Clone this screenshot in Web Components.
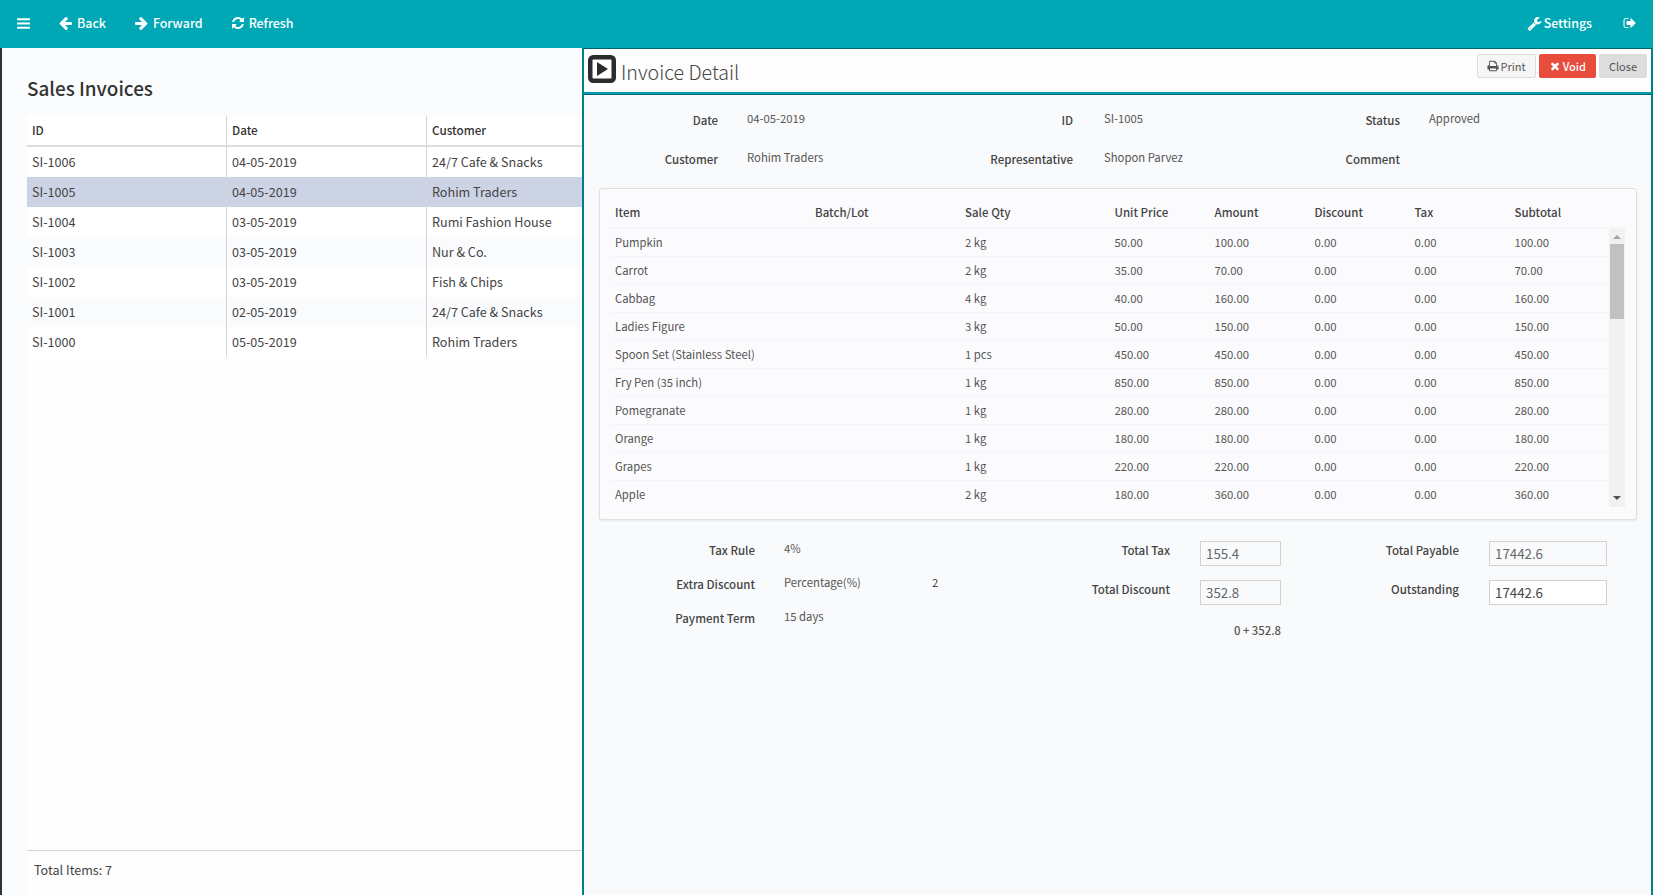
<!DOCTYPE html>
<html>
<head>
<meta charset="utf-8">
<title>Sales Invoices</title>
<style>
    html, body { margin: 0; height: 100%; overflow: hidden; }
    body {
        font-family: "Noto Sans CJK SC", "Source Sans Pro", "Noto Sans", sans-serif;
        font-size: 12.6px;
        color: #444;
        display: flex;
        flex-direction: column;
        height: 895px;
    }
</style>
</head>
<body>
<app-toolbar></app-toolbar>
<app-workspace>
    <invoice-list></invoice-list>
    <invoice-detail></invoice-detail>
</app-workspace>

<script>
const ICONS = {
    bars: 'M1664 1344v128q0 26-19 45t-45 19h-1408q-26 0-45-19t-19-45v-128q0-26 19-45t45-19h1408q26 0 45 19t19 45zm0-512v128q0 26-19 45t-45 19h-1408q-26 0-45-19t-19-45v-128q0-26 19-45t45-19h1408q26 0 45 19t19 45zm0-512v128q0 26-19 45t-45 19h-1408q-26 0-45-19t-19-45v-128q0-26 19-45t45-19h1408q26 0 45 19t19 45z',
    back: 'M1664 832v128q0 53-32.500 90.500t-84.500 37.500h-704l293 294q38 36 38 90t-38 90l-75 76q-38 38-90 38-53 0-91-38l-651-652q-37-37-37-90 0-52 37-91l651-650q39-39 91-39 51 0 90 39l75 74q38 38 38 91t-38 91l-293 293h704q52 0 84.500 37.500t32.500 90.500z',
    forward: 'M1600 896q0 54-37 91l-651 651q-39 37-91 37-51 0-90-37l-75-75q-38-38-38-91t38-91l293-293h-704q-52 0-84.500-37.500t-32.500-90.500v-128q0-53 32.500-90.500t84.500-37.500h704l-293-294q-38-36-38-90t38-90l75-75q38-38 90-38 53 0 91 38l651 651q37 35 37 90z',
    refresh: 'M1639 1056q0 5-1 7-64 268-268 434.500t-478 166.500q-146 0-282.500-55t-243.500-157l-129 129q-19 19-45 19t-45-19-19-45v-448q0-26 19-45t45-19h448q26 0 45 19t19 45-19 45l-137 137q71 66 161 102t187 36q134 0 250-65t186-179q11-17 53-117 8-23 30-23h192q13 0 22.500 9.500t9.500 22.500zm25-800v448q0 26-19 45t-45 19h-448q-26 0-45-19t-19-45 19-45l138-138q-148-137-349-137-134 0-250 65t-186 179q-11 17-53 117-8 23-30 23h-199q-13 0-22.500-9.500t-9.500-22.500v-7q65-268 270-434.500t480-166.500q146 0 284 55.500t245 156.500l130-129q19-19 45-19t45 19 19 45z',
    wrench: 'M448 1472q0-26-19-45t-45-19-45 19-19 45 19 45 45 19 45-19 19-45zm644-420l-682 682q-37 37-90 37-52 0-91-37l-106-108q-38-36-38-90 0-53 38-91l681-681q39 98 114.500 173.500t173.500 114.500zm634-435q0 39-23 106-47 134-164.500 217.500t-258.500 83.500q-185 0-316.500-131.500t-131.500-316.500 131.500-316.500 316.500-131.500q58 0 121.500 16.500t107.500 46.500q16 11 16 28t-16 28l-293 169v224l193 107q5-3 79-48.500t135.500-81 70.500-35.500q15 0 23.500 10t8.500 25z',
    signout: 'M704 1440q0 4 1 20t.5 26.500-3 23.500-10 19.500-20.500 6.500h-320q-119 0-203.500-84.500t-84.500-203.500v-704q0-119 84.500-203.500t203.500-84.500h320q13 0 22.500 9.500t9.500 22.500q0 4 1 20t.5 26.500-3 23.500-10 19.500-20.500 6.500h-320q-66 0-113 47t-47 113v704q0 66 47 113t113 47h312l11.500 1 11.500 3 8 5.500 7 9 2 13.500zm928-544q0 26-19 45l-544 544q-19 19-45 19t-45-19-19-45v-288h-448q-26 0-45-19t-19-45v-384q0-26 19-45t45-19h448v-288q0-26 19-45t45-19 45 19l544 544q19 19 19 45z',
    print: 'M448 1536h896v-256h-896v256zm0-640h896v-384h-160q-40 0-68-28t-28-68v-160h-640v640zm1152 64q0-26-19-45t-45-19-45 19-19 45 19 45 45 19 45-19 19-45zm128 0v416q0 13-9.500 22.500t-22.500 9.500h-224v160q0 40-28 68t-68 28h-960q-40 0-68-28t-28-68v-160h-224q-13 0-22.500-9.500t-9.500-22.500v-416q0-79 56.500-135.500t135.500-56.500h64v-544q0-40 28-68t68-28h672q40 0 88 20t76 48l152 152q28 28 48 76t20 88v256h64q79 0 135.500 56.500t56.500 135.500z',
    times: 'M1490 1322q0 40-28 68l-136 136q-28 28-68 28t-68-28l-294-294-294 294q-28 28-68 28t-68-28l-136-136q-28-28-28-68t28-68l294-294-294-294q-28-28-28-68t28-68l136-136q28-28 68-28t68 28l294 294 294-294q28-28 68-28t68 28l136 136q28 28 28 68t-28 68l-294 294 294 294q28 28 28 68z'
};

class FaIcon extends HTMLElement {
    connectedCallback() {
        const size = this.getAttribute('size') || 14;
        this.attachShadow({mode: 'open'}).innerHTML = `
            <style>
                :host { display: inline-flex; flex: none; }
                svg { width: ${size}px; height: ${size}px; fill: currentColor; display: block; }
            </style>
            <svg viewBox="0 0 1792 1792"><path d="${ICONS[this.getAttribute('name')]}"/></svg>`;
    }
}

const toolbarTemplate = document.createElement('template');
toolbarTemplate.innerHTML = `
    <style>
        :host {
            display: flex;
            flex: none;
            align-items: center;
            height: 48px;
            background: #00a8b5;
            color: #fff;
            font-size: 12.4px;
            padding: 0 0 2px 16px;
            box-sizing: border-box;
        }
        .item { display: flex; align-items: center; gap: 4px; font-weight: 500; }
        .menu { margin-right: 27px; }
        .nav { margin-right: 28px; }
        .spacer { flex: 1; }
        .settings { margin-right: 31px; gap: 2px; }
        .logout { margin-right: 16px; }
    </style>
    <span class="item menu"><fa-icon name="bars" size="15"></fa-icon></span>
    <span class="item nav"><fa-icon name="back" size="15"></fa-icon>Back</span>
    <span class="item nav"><fa-icon name="forward" size="15"></fa-icon>Forward</span>
    <span class="item nav"><fa-icon name="refresh" size="14"></fa-icon>Refresh</span>
    <span class="spacer"></span>
    <span class="item settings"><fa-icon name="wrench" size="15"></fa-icon>Settings</span>
    <span class="item logout"><fa-icon name="signout" size="14"></fa-icon></span>
`;

class AppToolbar extends HTMLElement {
    constructor() {
        super();
        this.attachShadow({mode: 'open'});
        this.shadowRoot.appendChild(toolbarTemplate.content.cloneNode(true));
    }
}

class AppWorkspace extends HTMLElement {
    constructor() {
        super();
        this.attachShadow({mode: 'open'}).innerHTML = `
            <style>
                :host { display: flex; flex: 1; min-height: 0; }
            </style>
            <slot></slot>`;
    }
}

const INVOICES = [
    ['SI-1006', '04-05-2019', '24/7 Cafe & Snacks'],
    ['SI-1005', '04-05-2019', 'Rohim Traders'],
    ['SI-1004', '03-05-2019', 'Rumi Fashion House'],
    ['SI-1003', '03-05-2019', 'Nur & Co.'],
    ['SI-1002', '03-05-2019', 'Fish & Chips'],
    ['SI-1001', '02-05-2019', '24/7 Cafe & Snacks'],
    ['SI-1000', '05-05-2019', 'Rohim Traders']
];

const esc = (s) => s.replace(/&/g, '&amp;');

class InvoiceList extends HTMLElement {
    constructor() {
        super();
        const rows = INVOICES.map((r, i) => `
            <div class="row ${i === 1 ? 'selected' : ''} ${i % 2 ? 'alt' : ''}">
                <span>${r[0]}</span><span>${r[1]}</span><span>${esc(r[2])}</span>
            </div>`).join('');
        this.attachShadow({mode: 'open'}).innerHTML = `
            <style>
                :host {
                    display: flex;
                    flex-direction: column;
                    flex: none;
                    width: 582px;
                    box-sizing: border-box;
                    border-left: 2px solid #2c3538;
                    padding-left: 25px;
                    background: #fafcfd;
                    color: #444;
                }
                h1 {
                    margin: 0;
                    padding: 26px 0 15px 0;
                    font-size: 18.900px;
                    line-height: 27px;
                    font-weight: 500;
                    color: #333;
                }
                .table { flex: 1; background: #fefefe; }
                .row {
                    display: grid;
                    grid-template-columns: 200px 200px 1fr;
                    height: 30px;
                    line-height: 30px;
                    background: #fff;
                }
                .row.alt { background: #fafbfc; }
                .row.selected { background: #ccd3e4; }
                .row span { padding-left: 5px; border-right: 1px solid #d4d4d4; box-sizing: border-box; white-space: nowrap; overflow: hidden; }
                .row span:last-child { border-right: 0; }
                .head { border-bottom: 2px solid #ddd; height: 31px; box-sizing: border-box; font-size: 11.700px; font-weight: 500; color: #333; line-height: 27px; }
                .foot {
                    border-top: 1px solid #d4d4d4;
                    height: 44px;
                    line-height: 38px;
                    padding-left: 7px;
                    background: #fefefe;
                }
            </style>
            <h1>Sales Invoices</h1>
            <div class="table">
                <div class="row head"><span>ID</span><span>Date</span><span>Customer</span></div>
                ${rows}
            </div>
            <div class="foot">Total Items: 7</div>`;
    }
}

class AppButton extends HTMLElement {
    constructor() {
        super();
        this.attachShadow({mode: 'open'}).innerHTML = `
            <style>
                :host {
                    display: inline-flex;
                    align-items: center;
                    justify-content: center;
                    gap: 2px;
                    height: 24px;
                    box-sizing: border-box;
                    border: 1px solid #ddd;
                    border-radius: 2px;
                    background: #f6f6f6;
                    color: #555;
                    font-size: 11px;
                    padding: 0 9px;
                }
                :host([kind="danger"]) { background: #e74c3c; border-color: #e74c3c; color: #fff; font-weight: 500; }
                :host([kind="plain"]) { background: #ddd; }
            </style>
            <slot></slot>`;
    }
}

class FormField extends HTMLElement {
    constructor() {
        super();
        this.attachShadow({mode: 'open'}).innerHTML = `
            <style>
                :host { display: contents; }
                .label { text-align: right; font-weight: 500; font-size: 11.500px; line-height: 20px; padding-top: 2px; color: #444; white-space: nowrap; }
                .value { font-size: 11.300px; line-height: 20px; color: #555; white-space: nowrap; }
                :host([indent]) .value { padding-left: 2px; }
            </style>
            <div class="label"><slot name="label"></slot></div>
            <div class="value"><slot></slot></div>`;
    }
}

class TotalField extends HTMLElement {
    constructor() {
        super();
        this.attachShadow({mode: 'open'}).innerHTML = `
            <style>
                :host { display: contents; }
                .label { text-align: right; font-weight: 500; font-size: 11.500px; line-height: 18px; color: #444; white-space: nowrap; }
                input {
                    height: 25px;
                    width: 100%;
                    box-sizing: border-box;
                    border: 1px solid #d2d2d2;
                    background: transparent;
                    padding: 0 5px 0;
                    font: 13.300px "Noto Sans CJK SC", sans-serif;
                    color: #666;
                    margin: 0;
                    border-radius: 0;
                }
                :host([active]) input { background: #fff; color: #444; }
            </style>
            <div class="label">${this.getAttribute('label')}</div>
            <input value="${this.getAttribute('value')}">`;
    }
}

const LINES = [
    ['Pumpkin', '2 kg', '50.00', '100.00'],
    ['Carrot', '2 kg', '35.00', '70.00'],
    ['Cabbag', '4 kg', '40.00', '160.00'],
    ['Ladies Figure', '3 kg', '50.00', '150.00'],
    ['Spoon Set (Stainless Steel)', '1 pcs', '450.00', '450.00'],
    ['Fry Pen (35 inch)', '1 kg', '850.00', '850.00'],
    ['Pomegranate', '1 kg', '280.00', '280.00'],
    ['Orange', '1 kg', '180.00', '180.00'],
    ['Grapes', '1 kg', '220.00', '220.00'],
    ['Apple', '2 kg', '180.00', '360.00']
];

class LineItems extends HTMLElement {
    constructor() {
        super();
        const heads = ['Item', 'Batch/Lot', 'Sale Qty', 'Unit Price', 'Amount', 'Discount', 'Tax', 'Subtotal'];
        const rows = LINES.map((l) => `
            <div class="row">
                <span>${l[0]}</span><span></span><span>${l[1]}</span><span>${l[2]}</span>
                <span>${l[3]}</span><span>0.00</span><span>0.00</span><span>${l[3]}</span>
            </div>`).join('');
        this.attachShadow({mode: 'open'}).innerHTML = `
            <style>
                :host {
                    display: block;
                    margin: 0 14px 0 15px;
                    height: 332px;
                    box-sizing: border-box;
                    padding: 11px 11px 0 10px;
                    border: 1px solid #e0e0e0;
                    border-radius: 3px;
                    box-shadow: 0 1px 2px rgba(0, 0, 0, .08);
                    background: #fbfbfd;
                }
                .row {
                    display: grid;
                    grid-template-columns: 200px 150px 149.500px 100px 100px 100px 100px 1fr;
                    font-size: 11.300px;
                    height: 28px;
                    line-height: 27px;
                    border-bottom: 1px solid #f4f5f7;
                    box-sizing: border-box;
                    color: #555;
                }
                .row span { padding-left: 5px; white-space: nowrap; }
                .head { font-size: 11.500px; font-weight: 500; color: #444; height: 29px; line-height: 24px; border-bottom: 2px solid #f4f5f7; }
                .body { display: flex; height: 278px; overflow: hidden; }
                .rows { flex: 1; }
                .bar {
                    flex: none;
                    width: 16px;
                    height: 278px;
                    background: #f1f1f1;
                    display: flex;
                    flex-direction: column;
                    align-items: center;
                }
                .up { width: 0; height: 0; margin: 6px 0 5px; border: 4px solid transparent; border-top: 0; border-bottom: 4px solid #a3a3a3; }
                .down { width: 0; height: 0; margin: auto 0 7px; border: 4px solid transparent; border-bottom: 0; border-top: 4px solid #505050; }
                .thumb { width: 14px; height: 75px; background: #c1c1c1; }
            </style>
            <div class="row head">${heads.map((h) => `<span>${h}</span>`).join('')}</div>
            <div class="body">
                <div class="rows">${rows}</div>
                <div class="bar"><i class="up"></i><i class="thumb"></i><i class="down"></i></div>
            </div>`;
    }
}

class InvoiceDetail extends HTMLElement {
    constructor() {
        super();
        this.attachShadow({mode: 'open'}).innerHTML = `
            <style>
                :host {
                    display: flex;
                    flex-direction: column;
                    flex: 1;
                    min-width: 0;
                    box-sizing: border-box;
                    border-left: 2px solid #00808a;
                    border-right: 2px solid #00808a;
                    border-top: 1px solid #00666e;
                    background: #f9fafc;
                    color: #444;
                }
                header {
                    display: flex;
                    align-items: flex-start;
                    height: 45px;
                    box-sizing: border-box;
                    background: #fdfdfe;
                    border-bottom: 2px solid #00a0ac;
                    box-shadow: 0 1px 0 #00666e;
                    margin-bottom: 0;
                    padding: 6px 4px 0 4px;
                }
                .play { display: block; flex: none; }
                h2 {
                    margin: 0 0 0 5px;
                    font-size: 19.600px;
                    line-height: 32px;
                    font-weight: 300;
                    color: #444;
                    flex: 1;
                    padding-top: 1px;
                }
                .actions { display: flex; gap: 3px; margin-top: -1px; }
                .form {
                    display: grid;
                    grid-template-columns: 134px 177px 120px 170px 99px 1fr;
                    grid-auto-rows: 39px;
                    column-gap: 29px;
                    padding-top: 14px;
                    margin-bottom: 2px;
                }
                .totals {
                    display: flex;
                    padding-top: 13px;
                }
                .terms {
                    display: grid;
                    grid-template-columns: 171px 119px auto;
                    grid-auto-rows: 34px;
                    column-gap: 29px;
                    width: 426px;
                    padding-top: 5px;
                    align-content: start;
                }
                .sums {
                    display: grid;
                    margin-top: 8px;
                    column-gap: 30px;
                    grid-auto-rows: 39px;
                    align-content: start;
                }
                .sums.mid { grid-template-columns: 160px 81px; width: 271px; }
                .sums.end { grid-template-columns: 148px 118px; width: 296px; margin-left: 30px; }
                .note { grid-column: 1 / 3; text-align: right; font-size: 11.300px; font-weight: 500; line-height: 22px; color: #555; }
                .gap { font-size: 11.300px; line-height: 20px; }
            </style>
            <header>
                <svg class="play" width="28" height="28" viewBox="0 0 28 28">
                    <rect x="2.250" y="2.250" width="23.500" height="23.500" rx="3" fill="#fff" stroke="#2b2b30" stroke-width="4.500"/>
                    <path d="M9 7 L20 14 L9 21 Z" fill="#2b2b30"/>
                </svg>
                <h2>Invoice Detail</h2>
                <div class="actions">
                    <app-button><fa-icon name="print" size="12"></fa-icon>Print</app-button>
                    <app-button kind="danger"><fa-icon name="times" size="12"></fa-icon>Void</app-button>
                    <app-button kind="plain">Close</app-button>
                </div>
            </header>
            <div class="form">
                <form-field><span slot="label">Date</span>04-05-2019</form-field>
                <form-field indent><span slot="label">ID</span>SI-1005</form-field>
                <form-field><span slot="label">Status</span>Approved</form-field>
                <form-field><span slot="label">Customer</span>Rohim Traders</form-field>
                <form-field indent><span slot="label">Representative</span>Shopon Parvez</form-field>
                <form-field><span slot="label">Comment</span></form-field>
            </div>
            <line-items></line-items>
            <div class="totals">
                <div class="terms">
                    <form-field><span slot="label">Tax Rule</span>4%</form-field><span></span>
                    <form-field><span slot="label">Extra Discount</span>Percentage(%)</form-field><span class="gap">2</span>
                    <form-field><span slot="label">Payment Term</span>15 days</form-field><span></span>
                </div>
                <div class="sums mid">
                    <total-field label="Total Tax" value="155.4"></total-field>
                    <total-field label="Total Discount" value="352.8"></total-field>
                    <div class="note">0 + 352.8</div>
                </div>
                <div class="sums end">
                    <total-field label="Total Payable" value="17442.6"></total-field>
                    <total-field active label="Outstanding" value="17442.6"></total-field>
                </div>
            </div>`;
    }
}

customElements.define('fa-icon', FaIcon);
customElements.define('app-toolbar', AppToolbar);
customElements.define('app-workspace', AppWorkspace);
customElements.define('invoice-list', InvoiceList);
customElements.define('app-button', AppButton);
customElements.define('form-field', FormField);
customElements.define('total-field', TotalField);
customElements.define('line-items', LineItems);
customElements.define('invoice-detail', InvoiceDetail);
</script>
</body>
</html>
